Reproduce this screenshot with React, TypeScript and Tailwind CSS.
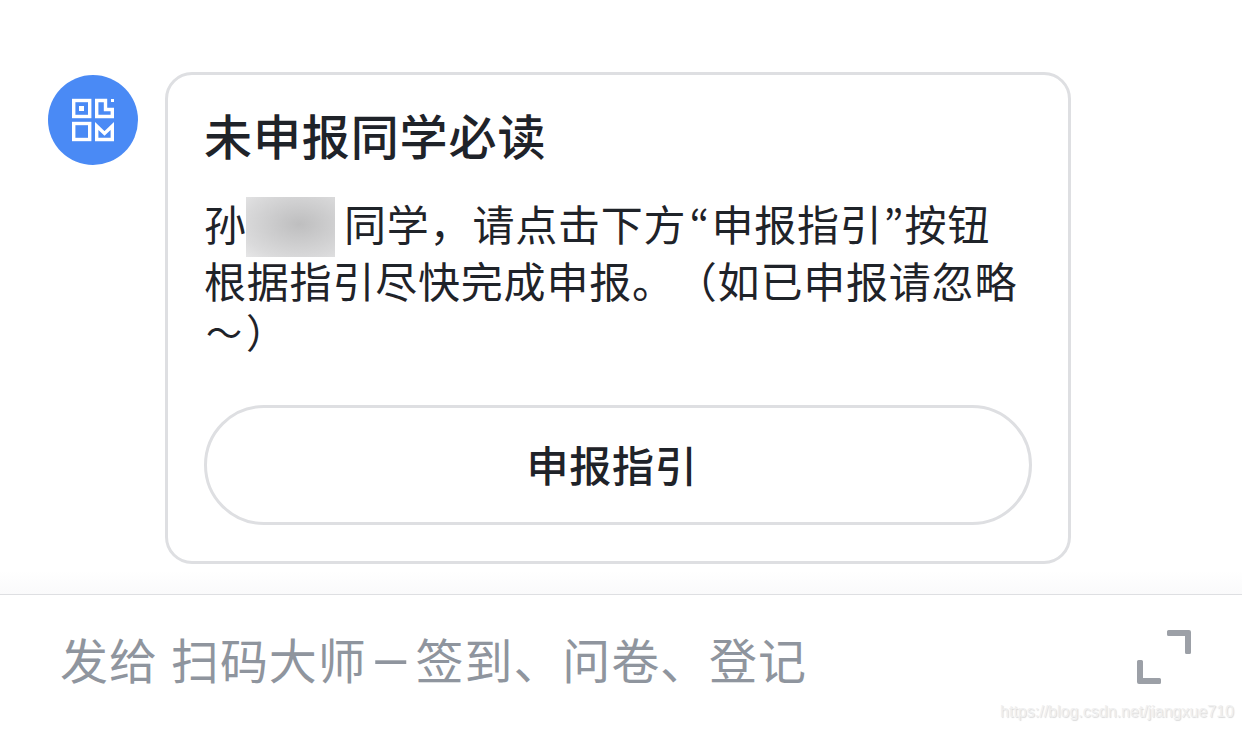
const cjk = "font-['Noto_Sans_CJK_SC',sans-serif] [text-spacing-trim:space-all]";

function QrIcon() {
    return (
        <svg className="h-[90px] w-[90px]" viewBox="0 0 90 90" fill="none">
            <g stroke="#fff" strokeWidth="3.4">
                <rect x="25.7" y="25.5" width="16" height="16" />
                <path d="M57.5 25.5H48.7V41.5H64.3V34.5H57.5Z" />
                <rect x="25.7" y="48.5" width="16" height="16" />
                <path d="M48.7 51V64.5H64.3V51L56.5 58.5Z" />
            </g>
            <rect x="31" y="31" width="5" height="5" fill="#fff" />
            <rect x="63" y="24" width="3" height="3" fill="#fff" />
        </svg>
    );
}

function ExpandIcon() {
    return (
        <svg className="h-[54px] w-[54px]" viewBox="0 0 54 54" fill="#9ca0a7">
            <path d="M31.5 0H52a2 2 0 0 1 2 2V22.5a1.5 1.5 0 0 1-1.5 1.5H49.5a1.5 1.5 0 0 1-1.5-1.5V6H31.5a1.5 1.5 0 0 1-1.5-1.5V1.5a1.5 1.5 0 0 1 1.5-1.5Z" />
            <path d="M1.5 30H4.5a1.5 1.5 0 0 1 1.5 1.5V48H22.5a1.5 1.5 0 0 1 1.5 1.5V52.5a1.5 1.5 0 0 1-1.5 1.5H2a2 2 0 0 1-2-2V31.5a1.5 1.5 0 0 1 1.5-1.5Z" />
        </svg>
    );
}

export default function App() {
    return (
        <div lang="zh-CN" className={`flex h-[730px] w-[1242px] flex-col overflow-hidden bg-white ${cjk}`}>
            {/* Message */}
            <div className="flex h-[594px] items-start bg-linear-to-b from-white from-96% to-[#fafafb] pt-[72px] pl-12">
                <div className="mt-[3px] mr-[27px] h-[90px] w-[90px] shrink-0 rounded-full bg-[#4a8af5]">
                    <QrIcon />
                </div>
                <div className="h-[492px] w-[906px] rounded-[27px] border-3 border-[#dedfe2] bg-white px-9 pt-[29px]">
                    <h2 className="h-[60px] text-[48px] leading-[60px] font-medium tracking-[0.9px] whitespace-nowrap text-[#1f2329]">未申报同学必读</h2>

                    <div className="mt-[30px] text-[42px] tracking-[0.8px] whitespace-nowrap text-[#1f2329]">
                        <div className="flex h-[57px] items-center leading-[57px]">
                            <span className="w-[42px]">孙</span>
                            <span className="mt-2 mr-[9px] h-[60px] w-[89px] bg-[radial-gradient(ellipse_at_60%_45%,#bebebf_0%,#c9c9ca_30%,#dadadb_75%,#e6e6e7_100%)]" />
                            <span>同学，请点击下方</span>
                            <span lang="ko" className="w-[25px] pl-[3px] font-['Noto_Sans_CJK_KR',sans-serif]">“</span>
                            <span>申报指引</span>
                            <span lang="ko" className="w-[22px] pl-px font-['Noto_Sans_CJK_KR',sans-serif]">”</span>
                            <span>按钮</span>
                        </div>
                        <div className="h-[57px] leading-[57px]">根据指引尽快完成申报。（如已申报请忽略</div>
                        <div className="flex h-[46px] leading-[46px]">
                            <span className="w-[42px] pl-0.5 text-[36px]">～</span>
                            <span className="text-[40px]">）</span>
                        </div>
                    </div>

                    <button className="mt-[51px] flex h-[120px] w-[828px] items-center justify-center rounded-full border-3 border-[#dedfe2] pr-3 pb-1 text-[42px] font-medium tracking-[0.8px] text-[#1f2329]">
                        申报指引
                    </button>
                </div>
            </div>

            {/* Input bar */}
            <div className="flex h-[136px] flex-col border-t border-[#dedfe2] bg-white">
                <div className="flex h-[105px] items-start justify-between pt-[35px] pr-[51px] pl-[60px]">
                    <div className="-mt-[5px] flex text-[48px] leading-[66px] tracking-[0.9px] whitespace-nowrap text-[#8f959e]">
                        <span className="w-[111px]">发给</span>
                        <span>扫码大师</span>
                        <span className="w-[49px] -translate-y-[3px] scale-x-[1.45] text-center font-medium">–</span>
                        <span>签到、问卷、登记</span>
                    </div>
                    <ExpandIcon />
                </div>
                <div className="pr-2 text-right font-['Liberation_Sans',sans-serif] text-base leading-6 text-[#f0f0f0] [text-shadow:1px_1px_1px_#dadada]">https://blog.csdn.net/jiangxue710</div>
            </div>
        </div>
    );
}
